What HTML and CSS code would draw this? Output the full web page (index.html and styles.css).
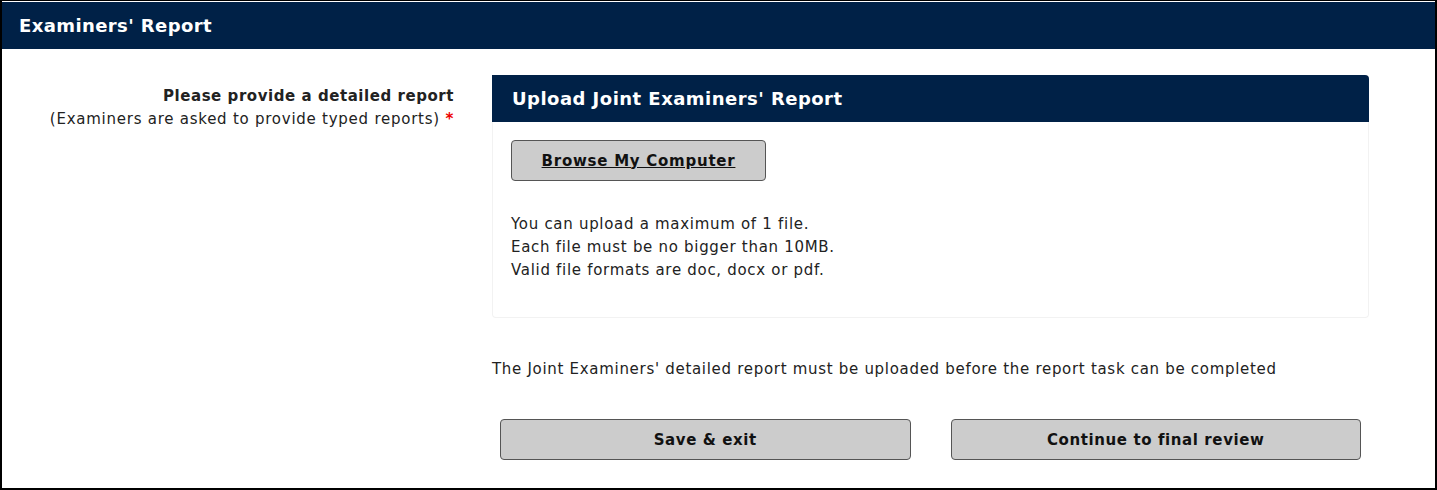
FILE: index.html
```html
<!DOCTYPE html>
<html lang="en">
<head>
<meta charset="utf-8">
<title>Examiners' Report</title>
<link rel="stylesheet" href="styles.css">
</head>
<body>
<div class="page">
  <div class="page-header"><h1 class="page-title">Examiners' Report</h1></div>
  <div class="content">
    <div class="label-col">
      <div class="label-main">Please provide a detailed report</div>
      <div class="label-sub">(Examiners are asked to provide typed reports) <span class="req">*</span></div>
    </div>
    <div class="main-col">
      <div class="panel">
        <div class="panel-header"><h2 class="panel-title">Upload Joint Examiners' Report</h2></div>
        <div class="panel-body">
          <button class="browse-btn" type="button">Browse My Computer</button>
          <div class="upload-info">
            <div>You can upload a maximum of 1 file.</div>
            <div>Each file must be no bigger than 10MB.</div>
            <div>Valid file formats are doc, docx or pdf.</div>
          </div>
        </div>
      </div>
      <p class="note">The Joint Examiners' detailed report must be uploaded before the report task can be completed</p>
      <div class="actions">
        <button class="action-btn" type="button">Save &amp; exit</button>
        <button class="action-btn" type="button">Continue to final review</button>
      </div>
    </div>
  </div>
</div>
</body>
</html>
```

FILE: styles.css
```css
* { box-sizing: border-box; }
html, body { margin: 0; padding: 0; background: #fff; }
body {
  font-family: "DejaVu Sans", Verdana, sans-serif;
  font-size: 15px;
  letter-spacing: 0.7px;
  color: #222;
}
.page {
  width: 1437px;
  height: 490px;
  border: 2px solid #000;
  border-top: 1px solid #000;
  padding-top: 1px;
  display: flex;
  flex-direction: column;
}
.page-header {
  background: #002147;
  height: 47px;
  display: flex;
  align-items: center;
  padding-left: 17px;
}
.page-title {
  margin: 0;
  color: #fff;
  font-size: 18px;
  font-weight: bold;
  letter-spacing: 0.4px;
}
.content {
  display: flex;
  padding-top: 26px;
}
.label-col {
  width: 490px;
  padding-right: 38px;
  text-align: right;
  padding-top: 10px;
  line-height: 23px;
}
.label-main { font-weight: bold; letter-spacing: 0.55px; }
.label-sub { letter-spacing: 0.75px; }
.req { color: #e00; font-weight: bold; }
.main-col {
  width: 877px;
}
.panel {
  border-radius: 4px;
  border: 1px solid #f2f2f2;
  border-top: none;
}
.panel-header {
  background: #002147;
  height: 47px;
  border-radius: 0 4px 0 0;
  display: flex;
  align-items: center;
  padding-left: 20px;
  margin: 0 -1px;
}
.panel-title {
  margin: 0;
  color: #fff;
  font-size: 18px;
  font-weight: bold;
  letter-spacing: 0.47px;
}
.panel-body {
  padding: 18px 18px 35px;
}
.browse-btn {
  display: block;
  width: 255px;
  height: 41px;
  background: #ccc;
  border: 1px solid #555;
  border-radius: 4px;
  font-family: inherit;
  font-size: 15px;
  font-weight: bold;
  letter-spacing: 0.75px;
  text-decoration: underline;
  color: #111;
  padding: 0;
}
.upload-info {
  margin-top: 32px;
  line-height: 23px;
}
.note {
  margin: 40px 0 0;
  line-height: 23px;
}
.actions {
  display: flex;
  gap: 40px;
  padding: 0 8px;
  margin-top: 38px;
}
.action-btn {
  flex: 1;
  height: 41px;
  background: #ccc;
  border: 1px solid #555;
  border-radius: 4px;
  font-family: inherit;
  font-size: 15px;
  font-weight: bold;
  letter-spacing: 0.6px;
  color: #111;
  padding: 0;
}
```
